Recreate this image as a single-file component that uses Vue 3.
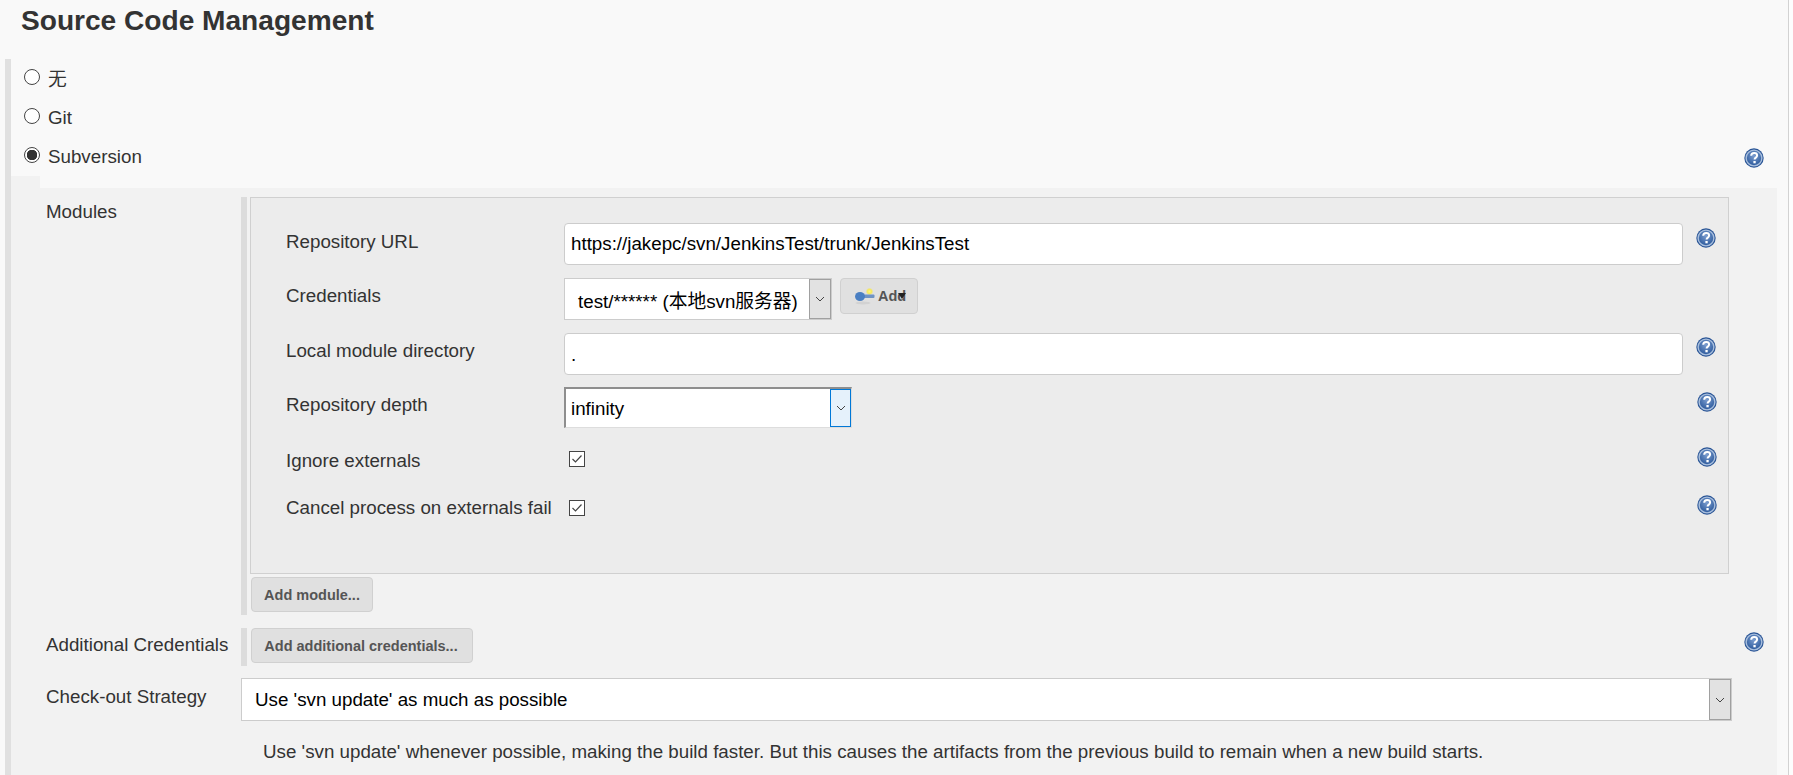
<script setup>
const radios = [
  { label: '无', checked: false },
  { label: 'Git', checked: false },
  { label: 'Subversion', checked: true }
]
</script>

<template>
  <div class="page">
    <h1 class="title">Source Code Management</h1>
    <div class="section">
      <div class="radios">
        <label v-for="r in radios" :key="r.label" class="radio-row">
          <input type="radio" name="scm" class="radio" :checked="r.checked" />
          <span>{{ r.label }}</span>
        </label>
        <svg class="help help-top" viewBox="0 0 20 20"><use href="#help-ico" /></svg>
      </div>
      <div class="panel">
        <span class="notch"></span>
        <div class="field modules">
          <div class="field-label">Modules</div>
          <div class="bar-col">
            <div class="module-box">
              <div class="row row-url">
                <div class="lab">Repository URL</div>
                <input class="text" value="https://jakepc/svn/JenkinsTest/trunk/JenkinsTest" />
                <svg class="help" viewBox="0 0 20 20"><use href="#help-ico" /></svg>
              </div>
              <div class="row row-cred">
                <div class="lab">Credentials</div>
                <div class="sel sel-cred">
                  <span class="sel-val">test/****** (本地svn服务器)</span>
                  <span class="arrow"><svg viewBox="0 0 10 6"><path d="M1 1l4 4 4-4" /></svg></span>
                </div>
                <button class="btn btn-add" type="button">
                  <svg class="key" viewBox="0 0 20 18">
                    <defs>
                      <radialGradient id="key-spark">
                        <stop offset="0" stop-color="#fff27a" />
                        <stop offset=".6" stop-color="#f7ea5c" />
                        <stop offset="1" stop-color="#f4e44e" stop-opacity=".2" />
                      </radialGradient>
                    </defs>
                    <ellipse cx="8" cy="16" rx="7.500" ry="1.500" fill="#d2d2d2" />
                    <circle cx="14.500" cy="4.500" r="3.500" fill="url(#key-spark)" />
                    <rect x="6" y="7.500" width="13.500" height="3.600" rx="1" fill="#6f93c4" />
                    <ellipse cx="5" cy="9.500" rx="5" ry="4.500" fill="#4a7fc2" />
                  </svg>
                  <span>Add</span>
                  <i class="caret"></i>
                </button>
              </div>
              <div class="row row-local">
                <div class="lab">Local module directory</div>
                <input class="text" value="." />
                <svg class="help" viewBox="0 0 20 20"><use href="#help-ico" /></svg>
              </div>
              <div class="row row-depth">
                <div class="lab">Repository depth</div>
                <div class="sel sel-depth">
                  <span class="sel-val">infinity</span>
                  <span class="arrow"><svg viewBox="0 0 10 6"><path d="M1 1l4 4 4-4" /></svg></span>
                </div>
                <svg class="help push" viewBox="0 0 20 20"><use href="#help-ico" /></svg>
              </div>
              <div class="row row-check row-ignore">
                <div class="lab">Ignore externals</div>
                <input type="checkbox" class="check" checked />
                <svg class="help push" viewBox="0 0 20 20"><use href="#help-ico" /></svg>
              </div>
              <div class="row row-check row-cancel">
                <div class="lab">Cancel process on externals fail</div>
                <input type="checkbox" class="check" checked />
                <svg class="help push" viewBox="0 0 20 20"><use href="#help-ico" /></svg>
              </div>
            </div>
            <button class="btn btn-module" type="button">Add module...</button>
          </div>
        </div>
        <div class="field additional">
          <div class="field-label">Additional Credentials</div>
          <div class="bar-col">
            <button class="btn btn-creds" type="button">Add additional credentials...</button>
          </div>
          <svg class="help help-add" viewBox="0 0 20 20"><use href="#help-ico" /></svg>
        </div>
        <div class="field strategy">
          <div class="field-label">Check-out Strategy</div>
          <div class="sel sel-strategy">
            <span class="sel-val">Use 'svn update' as much as possible</span>
            <span class="arrow"><svg viewBox="0 0 10 6"><path d="M1 1l4 4 4-4" /></svg></span>
          </div>
        </div>
        <p class="desc">Use 'svn update' whenever possible, making the build faster. But this causes the artifacts from the previous build to remain when a new build starts.</p>
      </div>
    </div>
    <svg class="defs" width="0" height="0">
      <defs>
        <radialGradient id="help-grad" cx="50%" cy="35%" r="65%">
          <stop offset="0" stop-color="#7b9dcf" />
          <stop offset="1" stop-color="#2f5c9e" />
        </radialGradient>
        <symbol id="help-ico" viewBox="0 0 20 20">
          <circle cx="10" cy="10" r="9.700" fill="#2a5596" />
          <circle cx="10" cy="10" r="8.600" fill="#a9bfdd" />
          <circle cx="10" cy="10" r="7.200" fill="url(#help-grad)" />
          <path d="M7.200 7.800c0-1.800 1.300-2.800 3-2.800s2.900 1 2.900 2.400c0 2.200-2.500 2.200-2.500 4.100" fill="none" stroke="#fff" stroke-width="2" />
          <rect x="9.400" y="13" width="2.300" height="2.300" fill="#fff" />
        </symbol>
      </defs>
    </svg>
  </div>
</template>

<style>
html, body { margin: 0; background: #f9f9f9; overflow: hidden; }
</style>

<style scoped>
.page {
  height: 775px;
  overflow: hidden;
  box-sizing: border-box;
  background: #f9f9f9;
  font-family: "Liberation Sans", "Noto Sans CJK SC", sans-serif;
  font-size: 18.750px;
  color: #333;
  padding-left: 5px;
  padding-right: 12px;
  border-right: 4px solid #fdfdfd;
  box-shadow: inset -1px 0 #d2d2d2;
}
.defs { position: absolute; }
.title {
  margin: 0 0 0 16px;
  height: 59px;
  font-size: 28.100px;
  line-height: 41px;
  font-weight: bold;
}
.section {
  border-left: 6px solid #e0e0e0;
  height: 716px;
}
.radios {
  position: relative;
  height: 129px;
}
.radio-row {
  display: flex;
  align-items: center;
  height: 39px;
  padding-left: 13px;
  gap: 8px;
}
.radio-row:first-child span { position: relative; top: -1px; }
.radio {
  appearance: none;
  margin: 0;
  width: 16px;
  height: 16px;
  border: 1px solid #444;
  border-radius: 50%;
  background: #fff;
  box-sizing: border-box;
  position: relative;
  top: -2px;
}
.radio:checked {
  background: radial-gradient(circle, #333 0 5px, #fff 5.500px);
}
.help { width: 20px; height: 20px; flex: none; }
.help-top { position: absolute; left: 1733px; top: 89px; }
.panel {
  position: relative;
  background: #f2f2f2;
  height: 587px;
  padding-left: 35px;
  box-sizing: border-box;
}
.notch {
  position: absolute;
  left: 0;
  top: -12px;
  width: 29px;
  height: 12px;
  background: #f2f2f2;
}
.field { display: flex; }
.field-label {
  width: 195px;
  flex: none;
  line-height: 20px;
}
.modules { padding-top: 9px; }
.modules .field-label { padding-top: 5px; }
.bar-col {
  border-left: 6px solid #dcdcdc;
  padding-left: 3px;
  width: 1482px;
  box-sizing: border-box;
}
.module-box {
  box-sizing: border-box;
  height: 377px;
  background: #ececec;
  border: 1px solid #d0d0d0;
  width: 1479px;
  padding-top: 25px;
}
.row {
  display: flex;
  align-items: center;
  padding-left: 35px;
}
.lab { width: 278px; flex: none; line-height: 20px; white-space: nowrap; }
.text {
  box-sizing: border-box;
  width: 1119px;
  height: 42px;
  border: 1px solid #ccc;
  border-radius: 4px;
  background: #fff;
  padding: 0 6px;
  font: inherit;
  color: #000;
  outline: none;
  margin-right: 13px;
}
.row-url { height: 42px; margin-bottom: 13px; align-items: flex-start; }
.row-url .lab { padding-top: 9px; }
.row-url .help { margin-top: 5px; }
.row-cred { height: 42px; margin-bottom: 13px; align-items: flex-start; }
.row-cred .lab { padding-top: 8px; }
.row-local { height: 42px; margin-bottom: 12px; align-items: flex-start; }
.row-local .lab { padding-top: 8px; }
.row-local .text { padding-top: 2px; }
.row-local .help { margin-top: 4px; }
.row-depth { height: 41px; margin-bottom: 16px; align-items: flex-start; }
.row-depth .lab { padding-top: 8px; }
.row-depth .help { margin-top: 5px; }
.row-check { height: 24px; margin-bottom: 25px; }
.row-check .help { position: relative; top: 1px; }
.row-ignore .lab { padding-top: 10px; }
.row-cancel .lab { padding-top: 6px; }
.row-cancel .help { top: 0; }
.row-cancel .check { position: relative; top: 3px; }
.row-ignore .check { position: relative; top: 3px; }
.check {
  appearance: none;
  margin: 0 0 0 5px;
  width: 16px;
  height: 16px;
  border: 1px solid #444;
  box-sizing: border-box;
  background: #fff no-repeat center/12px 12px;
  background-image: url("data:image/svg+xml,%3Csvg xmlns='http://www.w3.org/2000/svg' viewBox='0 0 12 12'%3E%3Cpath d='M1.500 6l3 3 6-6.500' fill='none' stroke='%23444' stroke-width='1.200'/%3E%3C/svg%3E");
}
.push { margin-left: auto; margin-right: 11px; }
.sel {
  box-sizing: border-box;
  display: flex;
  align-items: stretch;
  background: #fff;
  border: 1px solid #ccc;
  color: #000;
}
.sel-val {
  flex: 1;
  display: flex;
  align-items: center;
  white-space: nowrap;
  overflow: hidden;
}
.arrow {
  width: 22px;
  flex: none;
  display: flex;
  align-items: center;
  justify-content: center;
  background: #e2e2e2;
  border: 1px solid #a0a0a0;
  box-sizing: border-box;
}
.arrow svg { width: 10px; height: 6px; }
.arrow path { fill: none; stroke: #444; stroke-width: 1; }
.sel-cred { width: 268px; height: 42px; }
.sel-cred .sel-val { padding-left: 13px; }
.sel-depth {
  width: 288px;
  height: 41px;
  border-top: 2px solid #8e8e8e;
  border-left: 2px solid #8e8e8e;
  border-bottom: 1px solid #ddd;
  border-right: 1px solid #ddd;
}
.sel-depth .sel-val { padding: 2px 0 0 5px; }
.sel-depth .arrow {
  background: #e5f1fb;
  border: 1px solid #0078d7;
  width: 21px;
}
.btn {
  box-sizing: border-box;
  background: #e0e0e0;
  border: 1px solid #d0d0d0;
  border-radius: 4px;
  color: #555;
  font-family: inherit;
  font-weight: bold;
  font-size: 14.500px;
  padding: 0;
  height: 35px;
  display: block;
}
.btn-add {
  margin-left: 8px;
  width: 78px;
  height: 36px;
  display: flex;
  align-items: center;
  position: relative;
  padding-left: 14px;
  gap: 3px;
}
.key { width: 20px; height: 18px; flex: none; }
.caret {
  position: absolute;
  left: 57px;
  top: 14px;
  border-left: 4px solid transparent;
  border-right: 4px solid transparent;
  border-top: 6px solid #222;
}
.btn-module { width: 122px; margin-top: 3px; margin-bottom: 3px; margin-left: 1px; }
.additional { margin-top: 13px; position: relative; }
.additional .field-label { padding-top: 7px; }
.btn-creds { width: 222px; margin-left: 1px; padding-right: 2px; }
.additional .bar-col { height: 38px; width: auto; flex: none; }
.help-add { position: absolute; left: 1698px; top: 4px; }
.strategy { margin-top: 12px; }
.strategy .field-label { padding-top: 9px; }
.sel-strategy { width: 1491px; height: 43px; }
.sel-strategy .sel-val { padding-left: 13px; }
.desc {
  margin: 21px 0 0 217px;
  line-height: 20px;
  white-space: nowrap;
}
</style>
